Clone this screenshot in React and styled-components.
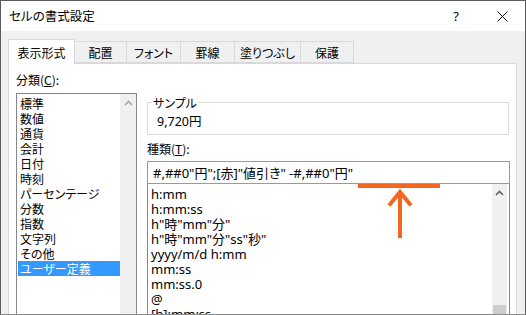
import React from "react";
import styled, { createGlobalStyle } from "styled-components";

const GlobalStyle = createGlobalStyle`
  html, body {
    margin: 0;
    padding: 0;
    background: #ffffff;
  }
  body {
    font-family: "Noto Sans CJK JP", "Noto Sans", sans-serif;
    font-size: 12px;
    font-feature-settings: "palt";
    color: #000;
  }
`;

const Window = styled.div`
  position: relative;
  width: 526px;
  height: 315px;
  box-sizing: border-box;
  border: 1px solid #5c5c5c;
  border-bottom-color: #8c8c8c;
  background: #f0f0f0;
  display: flex;
  flex-direction: column;
  overflow: hidden;
`;

const TitleBar = styled.div`
  height: 30px;
  flex: none;
  background: #fff;
  display: flex;
  align-items: center;
  justify-content: space-between;
  padding-left: 8px;
`;

const TitleText = styled.span`
  font-size: 12.5px;
  line-height: 16px;
`;

const TitleButtons = styled.div`
  display: flex;
  height: 100%;
`;

const TitleButton = styled.div`
  width: 46px;
  height: 100%;
  display: flex;
  align-items: center;
  justify-content: center;
  font-family: "Noto Sans", sans-serif;
  font-size: 13px;
`;

const Body = styled.div`
  flex: 1;
  min-height: 0;
  display: flex;
  flex-direction: column;
  padding: 8px 8px 0 7px;
`;

const TabRow = styled.div`
  display: flex;
  align-items: flex-end;
  height: 24px;
  flex: none;
  position: relative;
  z-index: 1;
`;

const Tab = styled.div`
  box-sizing: border-box;
  width: ${(p) => p.$w}px;
  height: ${(p) => (p.$active ? 25 : 22)}px;
  margin-bottom: ${(p) => (p.$active ? -1 : 0)}px;
  padding-top: ${(p) => (p.$active ? 2 : 0)}px;
  padding-bottom: ${(p) => (p.$active ? 1 : 0)}px;
  border: 1px solid #d9d9d9;
  border-bottom: ${(p) => (p.$active ? "none" : "1px solid #d9d9d9")};
  background: ${(p) => (p.$active ? "#fff" : "#f0f0f0")};
  display: flex;
  align-items: center;
  justify-content: center;
  & + & {
    margin-left: -1px;
  }
`;

const Panel = styled.div`
  flex: 1;
  min-height: 0;
  background: #fff;
  border: 1px solid #d9d9d9;
  border-bottom: none;
  display: flex;
  gap: 10px;
  padding: 8px 6px 0 7px;
`;

const LeftColumn = styled.div`
  width: 121px;
  flex: none;
  display: flex;
  flex-direction: column;
`;

const RightColumn = styled.div`
  flex: 1;
  min-width: 0;
  display: flex;
  flex-direction: column;
  padding-top: 23px;
`;

const Label = styled.div`
  line-height: 16px;
  margin-bottom: ${(p) => p.$gap}px;
  margin-top: ${(p) => p.$top || 0}px;
`;

const ListBox = styled.div`
  flex: 1;
  min-height: 0;
  display: flex;
  border: 1px solid #828790;
  border-bottom: none;
  margin-top: ${(p) => p.$top || 0}px;
`;

const Items = styled.div`
  flex: 1;
  min-width: 0;
  padding: ${(p) => p.$pad};
  font-family: ${(p) =>
    p.$latin ? `"Noto Sans", "Noto Sans CJK JP", sans-serif` : "inherit"};
  font-size: ${(p) => (p.$latin ? 13 : 12)}px;
`;

const Item = styled.div`
  height: 15px;
  line-height: 15px;
  padding-left: ${(p) => p.$indent}px;
  white-space: nowrap;
  background: ${(p) => (p.$selected ? "#3399ff" : "transparent")};
  color: ${(p) => (p.$selected ? "#fff" : "#000")};
`;

const ScrollBar = styled.div`
  width: ${(p) => p.$w}px;
  flex: none;
  margin-right: ${(p) => p.$gap || 0}px;
  background: #f0f0f0;
  display: flex;
  flex-direction: column;
`;

const ScrollArrow = styled.div`
  height: 17px;
  flex: none;
  display: flex;
  align-items: center;
  justify-content: center;
`;

const Thumb = styled.div`
  flex: none;
  margin: ${(p) => p.$top}px 1px 0 1px;
  height: 40px;
  background: #cdcdcd;
`;

const Group = styled.fieldset`
  margin: 0 1px 0 0;
  padding: 4px 9px 5px 9px;
  border: 1px solid #dcdcdc;
  min-width: 0;
`;

const Legend = styled.legend`
  padding: 0 1px;
  margin-left: -5px;
  line-height: 15px;
`;

const SampleValue = styled.div`
  line-height: 15px;
  font-family: "Noto Sans", "Noto Sans CJK JP", sans-serif;
  font-size: 12.5px;
`;

const FormatInput = styled.div`
  box-sizing: border-box;
  height: 23px;
  flex: none;
  border: 1px solid #9a9a9a;
  padding-left: 5px;
  display: flex;
  align-items: center;
  font-family: "Noto Sans", "Noto Sans CJK JP", sans-serif;
  font-size: 13px;
  white-space: nowrap;
  position: relative;
  z-index: 1;
`;

const Marker = styled.div`
  position: absolute;
  left: 357px;
  top: 182px;
  width: 82px;
  height: 5px;
  background: #f4661f;
`;

const ArrowSvg = styled.svg`
  position: absolute;
  left: 386px;
  top: 187px;
`;

const Chevron = ({ color }) => (
  <svg width="9" height="6" viewBox="0 0 9 6">
    <polyline points="1,5 4.5,1.5 8,5" fill="none" stroke={color} strokeWidth="1.6" />
  </svg>
);

const categories = [
  "標準",
  "数値",
  "通貨",
  "会計",
  "日付",
  "時刻",
  "パーセンテージ",
  "分数",
  "指数",
  "文字列",
  "その他",
  "ユーザー定義",
];

const formats = [
  "h:mm",
  "h:mm:ss",
  'h"時"mm"分"',
  'h"時"mm"分"ss"秒"',
  "yyyy/m/d h:mm",
  "mm:ss",
  "mm:ss.0",
  "@",
  "[h]:mm:ss",
];

const tabs = [
  { label: "表示形式", w: 67, active: true },
  { label: "配置", w: 53 },
  { label: "フォント", w: 55 },
  { label: "罫線", w: 55 },
  { label: "塗りつぶし", w: 67 },
  { label: "保護", w: 54 },
];

export default function App() {
  return (
    <>
      <GlobalStyle />
      <Window>
        <TitleBar>
          <TitleText>セルの書式設定</TitleText>
          <TitleButtons>
            <TitleButton>?</TitleButton>
            <TitleButton>
              <svg width="11" height="11" viewBox="0 0 11 11">
                <path d="M0.5 0.5 L10.5 10.5 M10.5 0.5 L0.5 10.5" stroke="#111" strokeWidth="1" />
              </svg>
            </TitleButton>
          </TitleButtons>
        </TitleBar>
        <Body>
          <TabRow>
            {tabs.map((t) => (
              <Tab key={t.label} $w={t.w} $active={t.active}>
                {t.label}
              </Tab>
            ))}
          </TabRow>
          <Panel>
            <LeftColumn>
              <Label $gap={5}>
                分類(<u>C</u>):
              </Label>
              <ListBox>
                <Items $pad="2px 0 0 1px">
                  {categories.map((c, i) => (
                    <Item key={c} $indent={2} $selected={i === categories.length - 1}>
                      {c}
                    </Item>
                  ))}
                </Items>
                <ScrollBar $w={16}>
                  <ScrollArrow>
                    <Chevron color="#a6a6a6" />
                  </ScrollArrow>
                </ScrollBar>
              </ListBox>
            </LeftColumn>
            <RightColumn>
              <Group>
                <Legend>サンプル</Legend>
                <SampleValue>9,720円</SampleValue>
              </Group>
              <Label $top={6} $gap={4}>
                種類(<u>T</u>):
              </Label>
              <FormatInput>#,##0"円";[赤]"値引き" -#,##0"円"</FormatInput>
              <ListBox $top={-1}>
                <Items $pad="3px 0 0 3px" $latin>
                  {formats.map((f) => (
                    <Item key={f} $indent={0}>
                      {f}
                    </Item>
                  ))}
                </Items>
                <ScrollBar $w={15} $gap={2}>
                  <ScrollArrow>
                    <Chevron color="#606060" />
                  </ScrollArrow>
                  <Thumb $top={104} />
                </ScrollBar>
              </ListBox>
            </RightColumn>
          </Panel>
        </Body>
        <Marker />
        <ArrowSvg width="27" height="51" viewBox="0 0 27 51">
          <line x1="13" y1="3" x2="13" y2="50" stroke="#f4661f" strokeWidth="4" />
          <polyline points="2,17.5 13,4 24,17.5" fill="none" stroke="#f4661f" strokeWidth="4" />
        </ArrowSvg>
      </Window>
    </>
  );
}
